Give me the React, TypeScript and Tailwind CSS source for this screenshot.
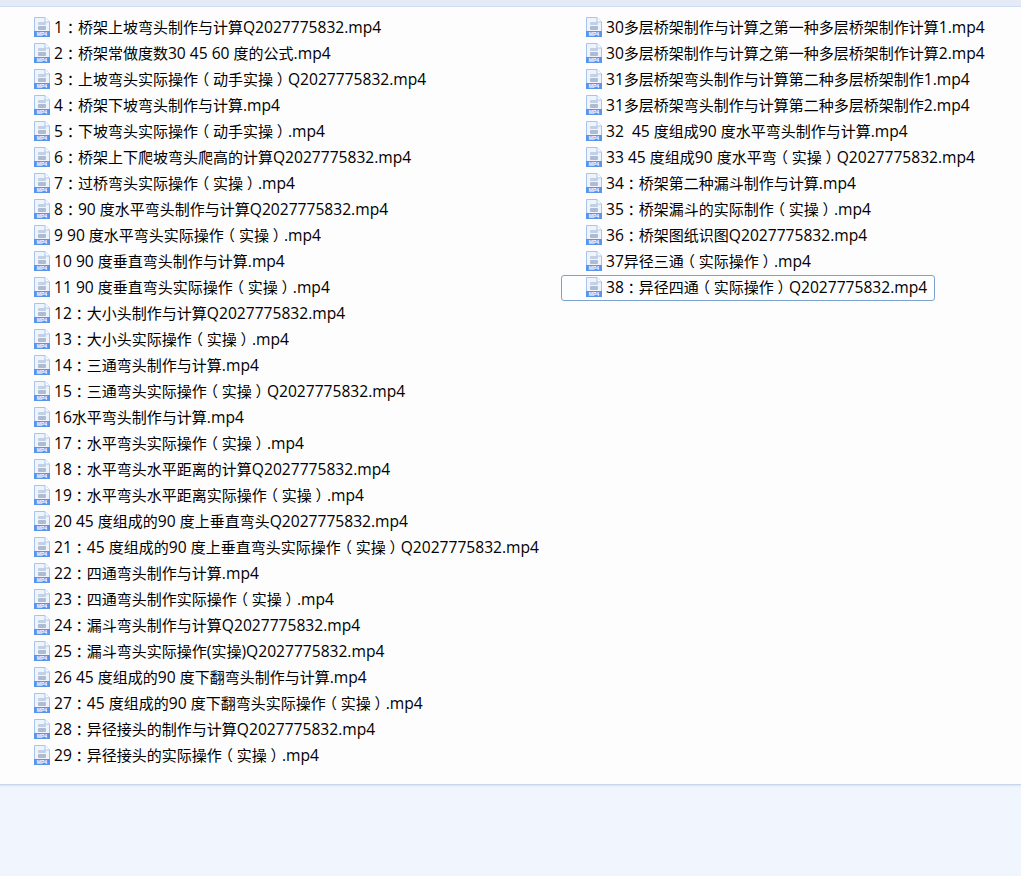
const leftFiles = [
  "1：桥架上坡弯头制作与计算Q2027775832.mp4",
  "2：桥架常做度数30 45 60 度的公式.mp4",
  "3：上坡弯头实际操作（动手实操）Q2027775832.mp4",
  "4：桥架下坡弯头制作与计算.mp4",
  "5：下坡弯头实际操作（动手实操）.mp4",
  "6：桥架上下爬坡弯头爬高的计算Q2027775832.mp4",
  "7：过桥弯头实际操作（实操）.mp4",
  "8：90 度水平弯头制作与计算Q2027775832.mp4",
  "9 90 度水平弯头实际操作（实操）.mp4",
  "10 90 度垂直弯头制作与计算.mp4",
  "11 90 度垂直弯头实际操作（实操）.mp4",
  "12：大小头制作与计算Q2027775832.mp4",
  "13：大小头实际操作（实操）.mp4",
  "14：三通弯头制作与计算.mp4",
  "15：三通弯头实际操作（实操）Q2027775832.mp4",
  "16水平弯头制作与计算.mp4",
  "17：水平弯头实际操作（实操）.mp4",
  "18：水平弯头水平距离的计算Q2027775832.mp4",
  "19：水平弯头水平距离实际操作（实操）.mp4",
  "20 45 度组成的90 度上垂直弯头Q2027775832.mp4",
  "21：45 度组成的90 度上垂直弯头实际操作（实操）Q2027775832.mp4",
  "22：四通弯头制作与计算.mp4",
  "23：四通弯头制作实际操作（实操）.mp4",
  "24：漏斗弯头制作与计算Q2027775832.mp4",
  "25：漏斗弯头实际操作(实操)Q2027775832.mp4",
  "26 45 度组成的90 度下翻弯头制作与计算.mp4",
  "27：45 度组成的90 度下翻弯头实际操作（实操）.mp4",
  "28：异径接头的制作与计算Q2027775832.mp4",
  "29：异径接头的实际操作（实操）.mp4",
];

const rightFiles = [
  "30多层桥架制作与计算之第一种多层桥架制作计算1.mp4",
  "30多层桥架制作与计算之第一种多层桥架制作计算2.mp4",
  "31多层桥架弯头制作与计算第二种多层桥架制作1.mp4",
  "31多层桥架弯头制作与计算第二种多层桥架制作2.mp4",
  "32  45 度组成90 度水平弯头制作与计算.mp4",
  "33 45 度组成90 度水平弯（实操）Q2027775832.mp4",
  "34：桥架第二种漏斗制作与计算.mp4",
  "35：桥架漏斗的实际制作（实操）.mp4",
  "36：桥架图纸识图Q2027775832.mp4",
  "37异径三通（实际操作）.mp4",
  "38：异径四通（实际操作）Q2027775832.mp4",
];

function Mp4Icon() {
  return (
    <svg width="18" height="20" viewBox="0 0 18 20" className="mb-[2px] shrink-0">
      <path d="M1.5 .5H12L16.5 5V19.5H1.5Z" fill="#eef4fd" stroke="#a9c4ea" />
      <path d="M12 .5V5H16.5" fill="#ffffff" stroke="#a9c4ea" />
      <rect x="5" y="5" width="8" height="3" rx="1" fill="#c3cfe2" />
      <rect x="5" y="9" width="8" height="4" rx="1" fill="#aebcd3" />
      <rect x="1" y="14" width="16" height="6" fill="#5a95ec" />
      <text x="9" y="19" textAnchor="middle" fontSize="5" fontWeight="700" fill="#ffffff" fontFamily="Liberation Sans, sans-serif">
        MP4
      </text>
    </svg>
  );
}

// latin runs sit a little wider than the CJK ones, full width punctuation is centred in its cell
function FileName({ name }: { name: string }) {
  const parts = name.split(/([\x20-\x7e]+|[：（）])/).filter(Boolean);
  return (
    <span className="whitespace-pre text-[15px] text-black">
      {parts.map((part, i) => {
        if (/^[\x20-\x7e]/.test(part)) {
          return (
            <span key={i} className="text-[15.6px]">
              {part}
            </span>
          );
        }
        if (/^[：（）]/.test(part)) {
          return (
            <span key={i} className="inline-block w-[15px] text-center [font-feature-settings:'halt']">
              {part}
            </span>
          );
        }
        return <span key={i}>{part}</span>;
      })}
    </span>
  );
}

function FileRow({ name, selected }: { name: string; selected?: boolean }) {
  return (
    <div
      className={
        selected
          ? "flex h-[26px] w-fit items-center gap-[3px] rounded-[3px] border border-[#7da2ce] bg-[#fdfeff] pl-[23px] pr-[7px]"
          : "flex h-[26px] w-fit items-center gap-[3px] pl-6 pr-[7px]"
      }
    >
      <Mp4Icon />
      <FileName name={name} />
    </div>
  );
}

export default function App() {
  return (
    <div
      className="h-[876px] w-[1021px] overflow-hidden bg-[#f1f5fd]"
      style={{ fontFamily: '"Open Sans", "Noto Sans CJK SC", sans-serif' }}
    >
      <div className="h-[7px] border-b border-[#cfdcef] bg-[#e4ebf6]" />
      <div className="flex h-[778px] border-b border-[#c8d6ec] bg-[#fdfdfe] pl-[9px] pt-2 shadow-[0_1px_2px_#d8e2f3]">
        <div className="w-[552px]">
          {leftFiles.map(name => (
            <FileRow key={name} name={name} />
          ))}
        </div>
        <div>
          {rightFiles.map((name, i) => (
            <FileRow key={name} name={name} selected={i === rightFiles.length - 1} />
          ))}
        </div>
      </div>
    </div>
  );
}
